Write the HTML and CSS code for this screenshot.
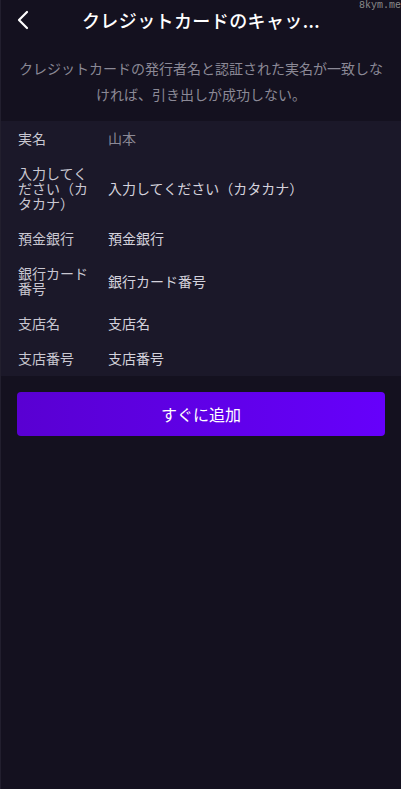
FILE: index.html
```html
<!DOCTYPE html>
<html lang="ja">
<head>
    <meta charset="UTF-8">
    <meta name="viewport" content="width=device-width, initial-scale=1.0">
    <title>クレジットカードのキャッシュアウト</title>
    <link rel="stylesheet" href="styles.css">
</head>
<body>

<div class="page">
    <div class="header">
        <a class="back-btn" href="#">
            <svg width="14" height="20" viewBox="0 0 14 20">
                <path d="M11 2 L3 10 L11 18" fill="none" stroke="#fff" stroke-width="2.2" stroke-linecap="round" stroke-linejoin="round"/>
            </svg>
        </a>
        <h1 class="title">クレジットカードのキャッ...</h1>
        <span class="mark">8kym.me</span>
    </div>

    <p class="notice">クレジットカードの発行者名と認証された実名が一致しなければ、引き出しが成功しない。</p>

    <div class="form-card">
        <div class="form-row">
            <div class="form-label">実名</div>
            <div class="form-value muted">山本</div>
        </div>
        <div class="form-row">
            <div class="form-label">入力してください（カタカナ）</div>
            <div class="form-value">入力してください（カタカナ）</div>
        </div>
        <div class="form-row">
            <div class="form-label">預金銀行</div>
            <div class="form-value">預金銀行</div>
        </div>
        <div class="form-row">
            <div class="form-label">銀行カード番号</div>
            <div class="form-value">銀行カード番号</div>
        </div>
        <div class="form-row">
            <div class="form-label">支店名</div>
            <div class="form-value">支店名</div>
        </div>
        <div class="form-row">
            <div class="form-label">支店番号</div>
            <div class="form-value">支店番号</div>
        </div>
    </div>

    <div class="btn-wrap">
        <button class="submit-btn" type="button">すぐに追加</button>
    </div>
</div>

</body>
</html>
```

FILE: styles.css
```css
body {
    margin: 0;
    background-color: #14111f;
    font-family: "Noto Sans CJK JP", "Noto Sans", sans-serif;
    color: #d2d0da;
}
.page {
    min-height: 789px;
    border-left: 1px solid #221f2e;
    box-sizing: border-box;
}
.header {
    position: relative;
    height: 44px;
    display: flex;
    align-items: center;
    justify-content: center;
}
.back-btn {
    position: absolute;
    left: 15px;
    top: 10px;
    display: flex;
}
.title {
    margin: 0;
    font-size: 18px;
    font-weight: 500;
    color: #ffffff;
    white-space: nowrap;
    letter-spacing: 0.4px;
    position: relative;
    top: -2px;
}
.mark {
    position: absolute;
    right: 0;
    top: 0;
    font-family: "Liberation Mono", monospace;
    font-size: 10px;
    line-height: 12px;
    color: #8b8b8b;
}
.notice {
    margin: 11px 0 0;
    padding: 0 16px;
    text-align: center;
    font-size: 14px;
    line-height: 26px;
    color: #8b8996;
}
.form-card {
    margin-top: 14px;
    background-color: #1b1829;
}
.form-row {
    display: flex;
    align-items: center;
    padding: 10px 17px;
}
.form-label {
    width: 72px;
    flex-shrink: 0;
    font-size: 14px;
    line-height: 15px;
    color: #c9c7d1;
    margin-right: 18px;
}
.form-value {
    font-size: 14px;
    line-height: 15px;
    color: #d4d2dc;
}
.form-value.muted {
    color: #8b8996;
}
.btn-wrap {
    padding: 16px 16px 0;
}
.submit-btn {
    width: 100%;
    height: 44px;
    border: none;
    border-radius: 4px;
    background: linear-gradient(90deg, #5900d2, #6600fb);
    color: #ffffff;
    font-family: "Noto Sans CJK JP", "Noto Sans", sans-serif;
    font-size: 16px;
    cursor: pointer;
}
```
